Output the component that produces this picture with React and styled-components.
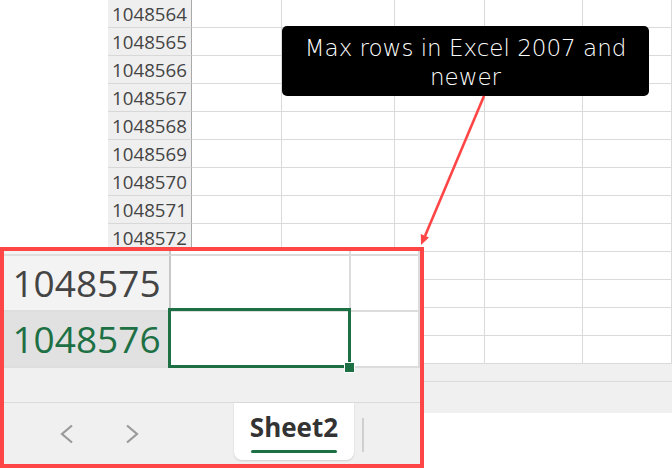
import React from 'react';
import styled, { createGlobalStyle } from 'styled-components';

const GREEN = '#1d7044';
const RED = '#ff4545';

const GlobalStyle = createGlobalStyle`
  html, body {
    margin: 0;
    padding: 0;
    background: #fff;
  }
  body {
    font-family: "Open Sans", "Liberation Sans", sans-serif;
  }
`;

const Page = styled.div`
  position: relative;
  width: 672px;
  height: 469px;
  overflow: hidden;
  background: #fff;
`;

/* background sheet, normal zoom */

const Sheet = styled.div`
  padding-left: 108px;
`;

const Row = styled.div`
  display: grid;
  grid-template-columns: 84px 90px 113px 90px 98px 1fr;
  height: 28px;
`;

const RowHeader = styled.div`
  box-sizing: border-box;
  background: #efefef;
  border-right: 1px solid #a9a9a9;
  border-bottom: 1px solid #d8d8d8;
  font-size: 18.7px;
  line-height: 27px;
  color: #444;
  text-align: center;
`;

const Cell = styled.div`
  box-sizing: border-box;
  border-right: 1px solid #dadada;
  border-bottom: 1px solid #dadada;
`;

const ScrollBand = styled.div`
  box-sizing: border-box;
  height: 18px;
  background: #f0f0f0;
  border-bottom: 1px solid #dcdcdc;
`;

const TabBand = styled.div`
  height: 31px;
  background: #f0f0f0;
`;

/* zoomed-in inset */

const Zoom = styled.div`
  position: absolute;
  left: 0;
  top: 247px;
  width: 424px;
  height: 221px;
  box-sizing: border-box;
  border: 4px solid ${RED};
  background: #f0f0f0;
  display: flex;
  flex-direction: column;
  overflow: hidden;
  z-index: 2;
`;

const ZRow = styled.div`
  display: grid;
  grid-template-columns: 167px 180px 1fr;
  height: ${p => p.h}px;
  background: #fff;
`;

const ZHeader = styled.div`
  box-sizing: border-box;
  background: ${p => (p.active ? '#e1e1e1' : '#f3f3f3')};
  border-right: 2px solid ${p => (p.active ? '#e1e1e1' : '#c8c8c8')};
  border-bottom: 2px solid #dedede;
  color: ${p => (p.active ? GREEN : '#444')};
  font-size: 37px;
  line-height: 54px;
  text-align: center;
`;

const ZCell = styled.div`
  box-sizing: border-box;
  position: relative;
  border-right: 2px solid #dcdcdc;
  border-bottom: 2px solid #dcdcdc;
`;

const SelectedCell = styled(ZCell)`
  z-index: 3;
  &::after {
    content: '';
    position: absolute;
    top: -4px;
    left: -3px;
    right: -2px;
    bottom: -2px;
    border: 3px solid ${GREEN};
  }
`;

const FillHandle = styled.span`
  position: absolute;
  right: -5px;
  bottom: -6px;
  width: 9px;
  height: 9px;
  background: ${GREEN};
  box-shadow: 0 0 0 1px #fff;
  z-index: 4;
`;

const ZScrollBand = styled.div`
  box-sizing: border-box;
  height: 35px;
  background: #f0f0f0;
  border-bottom: 1px solid #dadada;
`;

const TabBar = styled.div`
  display: flex;
  align-items: flex-start;
  height: 61px;
  background: #f0f0f0;
`;

const NavArea = styled.div`
  width: 230px;
  display: flex;
  gap: 51px;
  padding: 21px 0 0 56px;
  box-sizing: border-box;
`;

const Chevron = styled.svg`
  display: block;
  width: 14px;
  height: 20px;
`;

const Tab = styled.div`
  width: 120px;
  height: 57px;
  box-sizing: border-box;
  background: #fff;
  border-radius: 0 0 8px 8px;
  box-shadow: 0 1px 2px rgba(0, 0, 0, 0.14);
  display: flex;
  flex-direction: column;
  align-items: center;
  padding-top: 9px;
`;

const TabLabel = styled.span`
  font-size: 26px;
  font-weight: 700;
  line-height: 30px;
  color: #333;
`;

const TabUnderline = styled.span`
  width: 86px;
  height: 3px;
  margin-top: 8px;
  border-radius: 2px;
  background: ${GREEN};
`;

const TabDivider = styled.span`
  width: 2px;
  height: 34px;
  margin: 15px 0 0 8px;
  background: #cfcfcf;
`;

/* annotation */

const Callout = styled.div`
  position: absolute;
  left: 282px;
  top: 26px;
  width: 367px;
  height: 70px;
  box-sizing: border-box;
  padding: 8px 12px 0;
  background: #000;
  border-radius: 5px;
  color: #fff;
  font-family: "DejaVu Sans", "Liberation Sans", sans-serif;
  font-weight: 200;
  font-size: 23px;
  line-height: 29px;
  text-align: center;
  z-index: 3;
`;

const ArrowLayer = styled.svg`
  position: absolute;
  left: 0;
  top: 0;
  width: 672px;
  height: 469px;
  pointer-events: none;
  z-index: 5;
`;

// rows 1048573..1048576 sit under the zoomed inset, so their labels are never seen
const rows = [];
for (let n = 1048564; n <= 1048576; n++) rows.push(n);
const lastVisible = 1048572;

export default function App() {
  return (
    <Page>
      <GlobalStyle />
      <Sheet>
        {rows.map(n => (
          <Row key={n}>
            <RowHeader>{n <= lastVisible ? n : ''}</RowHeader>
            <Cell />
            <Cell />
            <Cell />
            <Cell />
            <Cell />
          </Row>
        ))}
        <ScrollBand />
        <TabBand />
      </Sheet>

      <Zoom>
        <ZRow h={5}>
          <ZHeader />
          <ZCell />
          <ZCell />
        </ZRow>
        <ZRow h={56}>
          <ZHeader>1048575</ZHeader>
          <ZCell />
          <ZCell />
        </ZRow>
        <ZRow h={56}>
          <ZHeader active>1048576</ZHeader>
          <SelectedCell>
            <FillHandle />
          </SelectedCell>
          <ZCell />
        </ZRow>
        <ZScrollBand />
        <TabBar>
          <NavArea>
            <Chevron viewBox="0 0 14 20">
              <polyline points="12,1.5 2,10 12,18.5" fill="none" stroke="#9a9a9a" strokeWidth="2.2" />
            </Chevron>
            <Chevron viewBox="0 0 14 20">
              <polyline points="2,1.5 12,10 2,18.5" fill="none" stroke="#9a9a9a" strokeWidth="2.2" />
            </Chevron>
          </NavArea>
          <Tab>
            <TabLabel>Sheet2</TabLabel>
            <TabUnderline />
          </Tab>
          <TabDivider />
        </TabBar>
      </Zoom>

      <Callout>Max rows in Excel 2007 and newer</Callout>

      <ArrowLayer viewBox="0 0 672 469">
        <line x1="484" y1="96" x2="425" y2="236" stroke={RED} strokeWidth="2.6" />
        <polygon points="421,245 429,237.5 420.8,234" fill={RED} />
      </ArrowLayer>
    </Page>
  );
}
